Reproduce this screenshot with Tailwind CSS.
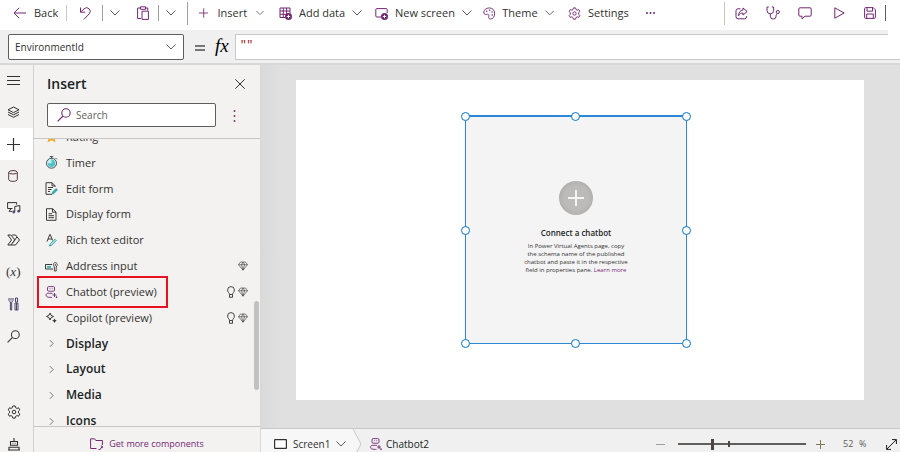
<!DOCTYPE html>
<html lang="en">
<head>
<meta charset="utf-8">
<meta name="viewport" content="width=device-width, initial-scale=1">
<title>Power Apps Studio</title>
<script src="https://cdn.jsdelivr.net/npm/@tailwindcss/browser@4"></script>
</head>
<body class="h-screen flex flex-col overflow-hidden bg-white font-['Open_Sans','Noto_Sans',sans-serif] text-[11px] leading-4 text-[#323130]">

<svg class="hidden" aria-hidden="true">
  <symbol id="chev" viewBox="0 0 10 6"><path d="M.5 .5 5 5 9.500 .5" fill="none" stroke="currentColor" stroke-width="1"/></symbol>
  <symbol id="right" viewBox="0 0 6 10"><path d="M1 1l4 4-4 4" fill="none" stroke="currentColor" stroke-width="1"/></symbol>
  <symbol id="plus" viewBox="0 0 12 12"><path d="M6 0v12M0 6h12" stroke="currentColor" stroke-width="1.100"/></symbol>
  <symbol id="gear" viewBox="0 0 14 14"><g fill="none" stroke="currentColor" stroke-linejoin="round"><path d="M5.800 1h2.400l.4 1.700 1.300.7 1.700-.6 1.200 2.100-1.300 1.200v1.700l1.300 1.300-1.200 2.100-1.700-.6-1.300.8-.4 1.700H5.800l-.4-1.700-1.300-.8-1.700.6-1.200-2.100 1.300-1.300V6.100L1.200 4.900l1.200-2.100 1.700.6 1.300-.7z"/><circle cx="7" cy="7" r="1.800"/></g></symbol>
  <symbol id="lens" viewBox="0 0 14 14"><g fill="none" stroke="currentColor" stroke-width="1.100"><circle cx="9" cy="5" r="4.200"/><path d="M6 8 .6 13.400"/></g></symbol>
  <symbol id="gem" viewBox="0 0 10 10"><path d="M2.500 1h5L9.500 3.700 5 9.200.5 3.700zM.5 3.700h9M3.500 3.700 5 9.200l1.500-5.500M3.500 3.700 5 1l1.500 2.700" fill="none" stroke="currentColor" stroke-width=".6"/></symbol>
  <symbol id="bulb" viewBox="0 0 8 12"><path d="M2.500 8.500C2.500 7 .6 6.300.6 4a3.400 3.400 0 0 1 6.800 0c0 2.300-1.900 3-1.900 4.500zM2.500 8.500v2.800h3V8.500" fill="none" stroke="currentColor" stroke-width=".9"/></symbol>
  <symbol id="bot" viewBox="0 0 12 12"><g fill="none" stroke="currentColor" stroke-width=".9"><rect x="2" y=".6" width="7" height="4.600" rx="1.200"/><path d="M4 2.700h.8M6.300 2.700h.8M7 7.300H2.700C1.200 7.300.6 8 .6 9.200c0 1.500 1.400 2.200 4.900 2.200h1"/><path d="M9 7v4M7 9h4M11 10.400v1.600M10.200 11.200h1.600"/></g></symbol>
</svg>

<header class="h-[30px] shrink-0 flex items-center pb-1 text-[#742774]">
  <button class="w-[66px] shrink-0 pl-[13px] flex items-center gap-2"><svg class="w-[13px] h-3" viewBox="0 0 13 12"><path d="M13 6H1M6.200.8 1 6l5.200 5.200" fill="none" stroke="currentColor"/></svg><span class="text-[#323130]">Back</span></button>
  <div class="w-px h-4 bg-[#c8c6c4]"></div>
  <button class="w-[35px] shrink-0 flex justify-center" aria-label="Undo"><svg class="w-3 h-[13px]" viewBox="0 0 12 13"><path d="M1.500.5v4.700h4.700M1.700 5 5 1.900a3.600 3.600 0 0 1 5.200 5L4.800 12.500" fill="none" stroke="currentColor"/></svg></button>
  <div class="w-px h-4 bg-[#a19f9d]"></div>
  <button class="w-[24px] shrink-0 flex justify-center text-[#605e5c]" aria-label="Undo options"><svg class="w-[10px] h-[6px]"><use href="#chev"/></svg></button>
  <button class="w-[31px] shrink-0 flex justify-center" aria-label="Paste"><svg class="w-3 h-[14px]" viewBox="0 0 12 14"><path d="M4 12.500H.6V2h2.900M8.500 2h2.300v2.500M3.500.8h5v2.500h-5zM5 5.200h6.400v8.200H5z" fill="none" stroke="currentColor"/></svg></button>
  <div class="w-px h-4 bg-[#a19f9d]"></div>
  <button class="w-[28px] shrink-0 flex justify-center pr-1 text-[#605e5c]" aria-label="Paste options"><svg class="w-[10px] h-[6px]"><use href="#chev"/></svg></button>
  <div class="w-px h-[23px] bg-[#a19f9d]"></div>
  <button class="w-[91px] shrink-0 pl-[11px] pr-[15px] flex items-center gap-[9px]"><svg class="w-3 h-3"><use href="#plus"/></svg><span class="text-[#323130]">Insert</span><svg class="ml-auto w-[10px] h-[6px] text-[#605e5c]"><use href="#chev"/></svg></button>
  <button class="w-[82px] shrink-0 flex items-center gap-[7px]"><svg class="w-[13px] h-[13px] shrink-0" viewBox="0 0 13 13"><path d="M7 10.500H1V1h10v5.500M1 4h10M1 7.300h6.500M4.300 1v9.500M7.600 1v6" fill="none" stroke="currentColor"/><circle cx="9.500" cy="9.500" r="3.500" fill="currentColor"/><path d="M9.500 7.800v3.400M7.800 9.500h3.400" stroke="#fff"/></svg><span class="text-[#323130] whitespace-nowrap">Add data</span><svg class="ml-auto w-[10px] h-[6px] shrink-0 text-[#605e5c]"><use href="#chev"/></svg></button>
  <button class="w-[108px] shrink-0 pl-[14px] flex items-center gap-[7px]"><svg class="w-[13px] h-[13px] shrink-0" viewBox="0 0 13 13"><path d="M6 10H1.800a1 1 0 0 1-1-1V2.600a1 1 0 0 1 1-1h9.400a1 1 0 0 1 1 1V6" fill="none" stroke="currentColor"/><circle cx="9.500" cy="9.500" r="3.500" fill="currentColor"/><path d="M9.500 7.800v3.400M7.800 9.500h3.400" stroke="#fff"/></svg><span class="text-[#323130] whitespace-nowrap">New screen</span><svg class="ml-auto w-[10px] h-[6px] shrink-0 text-[#605e5c]"><use href="#chev"/></svg></button>
  <button class="w-[85px] shrink-0 pl-[14px] flex items-center gap-[7px]"><svg class="w-[13px] h-[13px]" viewBox="0 0 13 13"><path d="M1 6C.2 3 3.500.6 6.800.6c3.200 0 5.600 2.400 5.600 5.700 0 3.300-1.800 6.100-4.300 6.100-2 0-2.200-1.500-1.900-2.800.3-1.500-.3-2.300-1.400-2.300-1.700 0-3.100.9-3.800-1.300z" fill="none" stroke="currentColor"/><g fill="currentColor"><circle cx="4" cy="4" r=".8"/><circle cx="7" cy="3" r=".8"/><circle cx="9.600" cy="5" r=".8"/><circle cx="9.800" cy="8" r=".8"/></g></svg><span class="text-[#323130]">Theme</span><svg class="ml-auto w-[10px] h-[6px] text-[#605e5c]"><use href="#chev"/></svg></button>
  <button class="w-[80px] shrink-0 pl-[14px] flex items-center gap-[7px]"><svg class="w-[13px] h-[13px]"><use href="#gear"/></svg><span class="text-[#323130]">Settings</span></button>
  <button class="w-[32px] shrink-0 flex justify-center" aria-label="More commands"><svg class="w-[9px] h-[2px]" viewBox="0 0 9 2" fill="currentColor"><circle cx="1" cy="1" r="1"/><circle cx="4.500" cy="1" r="1"/><circle cx="8" cy="1" r="1"/></svg></button>
  <div class="ml-auto w-px h-[23px] bg-[#c8c6c4]"></div>
  <button class="w-8 shrink-0 flex justify-center" aria-label="Share"><svg class="w-[13px] h-[13px]" viewBox="0 0 13 13"><path d="M5.500 1.800H3a2 2 0 0 0-2 2v6a2 2 0 0 0 2 2h6.500a2 2 0 0 0 2-2V9M8 1l4.200 3.500L8 8V6C5.800 6 4.500 7 3.500 8.800 3.800 5.500 5 3.400 8 3z" fill="none" stroke="currentColor" stroke-linejoin="round"/></svg></button>
  <button class="w-8 shrink-0 flex justify-center" aria-label="App checker"><svg class="w-[14px] h-[14px]" viewBox="0 0 14 14"><path d="M2.800 1H1v3.500a3.300 3.300 0 0 0 6.600 0V1H5.800M4.300 8v2.200a2.900 2.900 0 0 0 5.800 0c0-1.600.4-2 1.400-2.600" fill="none" stroke="currentColor"/><circle cx="11.800" cy="6" r="1.600" fill="none" stroke="currentColor"/></svg></button>
  <button class="w-8 shrink-0 flex justify-center" aria-label="Comments"><svg class="w-[14px] h-[13px]" viewBox="0 0 14 13"><path d="M2 .8h10a1.200 1.200 0 0 1 1.200 1.200v6A1.200 1.200 0 0 1 12 9.200H7l-3 2.700V9.200H2A1.200 1.200 0 0 1 .8 8V2A1.200 1.200 0 0 1 2 .8z" fill="none" stroke="currentColor"/></svg></button>
  <button class="w-8 shrink-0 flex justify-center pl-1" aria-label="Preview"><svg class="w-[11px] h-3" viewBox="0 0 11 12"><path d="M.8.8v10.400L10.200 6z" fill="none" stroke="currentColor" stroke-linejoin="round"/></svg></button>
  <button class="w-8 shrink-0 flex justify-center pl-[2px]" aria-label="Save"><svg class="w-3 h-3" viewBox="0 0 12 12"><path d="M.6 1.600a1 1 0 0 1 1-1h7.600l2.200 2.200v7.600a1 1 0 0 1-1 1H1.600a1 1 0 0 1-1-1zM3 .6v3.600h5.500V.6M2.700 11.400V7h6.600v4.400" fill="none" stroke="currentColor"/></svg></button>
  <div class="w-px h-4 bg-[#605e5c] mr-[14px]"></div>
</header>

<div class="h-[35px] shrink-0 flex items-start bg-[#f0f0f0] border-b-2 border-[#d8d8d8]">
  <div class="relative ml-2 mt-1 w-[176px] shrink-0">
    <select aria-label="Property" class="block w-full h-[26px] appearance-none rounded-[2px] border border-[#605e5c] bg-white pl-[6px] text-[10px] text-[#323130]"><option>EnvironmentId</option></select>
    <svg class="pointer-events-none absolute right-2 top-[10px] w-[10px] h-[6px] text-[#605e5c]"><use href="#chev"/></svg>
  </div>
  <label for="formula" class="w-[51px] shrink-0 h-8 flex items-center pl-[11px] gap-[10px] text-black"><svg class="w-[10px] h-[6px] mt-1" viewBox="0 0 10 6"><path d="M0 1h10M0 5h10" stroke="currentColor" stroke-width="1.200"/></svg><span class="font-['Liberation_Serif',serif] italic text-[19px] leading-4">fx</span></label>
  <input id="formula" value='""' class="mt-1 flex-1 min-w-0 h-[26px] border border-r-0 border-[#c8c8c8] bg-white pl-1 pb-1 font-['Liberation_Mono',monospace] text-[11px] text-[#a31515]">
  <div class="w-3 h-[30px] shrink-0 bg-white border-b border-[#c8c8c8]"></div>
</div>

<div class="flex-1 min-h-0 flex">
  <nav class="w-[34px] shrink-0 bg-[#f3f2f1] border-r border-[#d2d0ce] flex flex-col overflow-hidden text-[#323130]">
    <button class="h-[31px] shrink-0 pl-[7px]" aria-label="Expand"><svg class="w-[13px] h-[9px]" viewBox="0 0 13 9"><path d="M0 .5h13M0 4.500h13M0 8.500h13" stroke="currentColor"/></svg></button>
    <button class="h-8 shrink-0 pl-[7px]" aria-label="Tree view"><svg class="w-[13px] h-[13px]" viewBox="0 0 13 13"><path d="M6.500 1 12 3.800 6.500 6.600 1 3.800zM1 6l5.500 2.800L12 6M1 8.500l5.500 2.800L12 8.500" fill="none" stroke="currentColor" stroke-linejoin="round"/></svg></button>
    <button class="h-8 shrink-0 pl-[7px] bg-white" aria-label="Insert"><svg class="w-[13px] h-[13px]"><use href="#plus"/></svg></button>
    <button class="h-8 shrink-0 pl-[8px]" aria-label="Data"><svg class="w-[10px] h-3" viewBox="0 0 10 12"><g fill="none" stroke="#5b3a3c"><ellipse cx="5" cy="2.300" rx="4.300" ry="1.700"/><path d="M.7 2.300v7.200c0 1 2 1.900 4.300 1.900s4.300-.9 4.300-1.900V2.300"/></g></svg></button>
    <button class="h-8 shrink-0 pl-[7px]" aria-label="Media"><svg class="w-[14px] h-3" viewBox="0 0 14 12"><g fill="none" stroke="currentColor"><path d="M5.500 6.500H.6V.6h9v2M2 9.300 4 6.700M2 9.300h3"/><path d="M7.800 10V4.500l5-1v5.500"/></g><circle cx="6.700" cy="10" r="1.400" fill="#4b4a6b"/><circle cx="11.700" cy="9.200" r="1.400" fill="#4b4a6b"/></svg></button>
    <button class="h-8 shrink-0 pl-[7px]" aria-label="Power Automate"><svg class="w-[13px] h-3" viewBox="0 0 13 12"><path d="M.8 1h3L8 6l-4.200 5h-3L4.600 6zM5.200 1h3.300l4 5-4 5H3.800M5.500 8.800 10 3" fill="none" stroke="currentColor" stroke-linejoin="round"/></svg></button>
    <button class="h-8 shrink-0 pl-[6px] text-left font-['Liberation_Serif',serif] text-[13px]" aria-label="Variables">(<i>x</i>)</button>
    <button class="h-8 shrink-0 pl-[8px]" aria-label="Advanced tools"><svg class="w-[11px] h-[14px]" viewBox="0 0 11 14"><g fill="none" stroke="#4b4668"><path d="M1 1v2.500L2.400 5v8h1.300V5L5 3.500V1M3 1v2.500"/><path d="M7.500 1h2v4h-2zM7 6h3v7H7zM8.500 6v7"/></g></svg></button>
    <button class="h-8 shrink-0 pl-[7px]" aria-label="Search"><svg class="w-[13px] h-[13px]"><use href="#lens"/></svg></button>
    <div class="mt-auto -mb-2 flex flex-col">
      <button class="h-8 shrink-0 pl-[7px]" aria-label="Settings"><svg class="w-[14px] h-[14px]"><use href="#gear"/></svg></button>
      <button class="h-8 shrink-0 pl-[8px]" aria-label="Virtual agent"><svg class="w-3 h-[13px]" viewBox="0 0 12 13"><path d="M6 0v3M2.500 3.500h7v3.800h-7zM4.500 5.200h.8M6.700 5.200h.8M1 12.500V9.200h10v3.300M0 12h12" fill="none" stroke="currentColor" stroke-width="1.100"/></svg></button>
    </div>
  </nav>

  <aside class="w-[227px] shrink-0 bg-[#f3f2f1] border-r border-[#d8d8d8] flex flex-col">
    <div class="h-[38px] shrink-0 flex items-center justify-between pl-[13px] pr-[15px]">
      <h2 class="text-[14px] font-semibold text-[#201f1e]">Insert</h2>
      <button aria-label="Close"><svg class="w-[10px] h-[10px]" viewBox="0 0 10 10"><path d="M.3.300l9.400 9.400M9.700.3.300 9.700" stroke="currentColor"/></svg></button>
    </div>
    <div class="h-[36px] shrink-0 flex items-start pl-[13px] border-b border-[#c8c6c4]">
      <div class="relative w-[169px]">
        <svg class="absolute left-[10px] top-[5px] w-[14px] h-[14px] text-[#742774]"><use href="#lens"/></svg>
        <input type="search" aria-label="Search" placeholder="Search" class="block w-full h-6 rounded-[2px] border border-[#605e5c] bg-white pl-7 text-[10px] placeholder:text-[#605e5c]">
      </div>
      <button class="ml-[17px] mt-[7px]" aria-label="More"><svg class="w-[3px] h-3" viewBox="0 0 3 12" fill="#742774"><circle cx="1.500" cy="1" r=".9"/><circle cx="1.500" cy="6" r=".9"/><circle cx="1.500" cy="11" r=".9"/></svg></button>
    </div>
    <div class="relative flex-1 min-h-0 overflow-hidden">
      <ul class="-mt-[15px] h-[310px] flex flex-col pl-[11px] pr-3 [&>li]:flex-1 [&>li]:flex [&>li]:items-center [&>li>button]:flex [&>li>button]:items-center [&>li>button]:w-full [&>li>button]:gap-2">
        <li><button><svg class="w-[13px] h-[13px]" viewBox="0 0 13 13"><path d="m6.500.5 1.900 4 4.300.5-3.200 3 .9 4.400-3.900-2.200-3.900 2.200.9-4.400L.3 5l4.300-.5z" fill="#f7a928"/></svg>Rating</button></li>
        <li><button><svg class="w-[13px] h-[13px]" viewBox="0 0 13 13"><circle cx="6.500" cy="7.200" r="5" fill="#e8f6f6" stroke="#3b5156"/><circle cx="6.500" cy="7.200" r="3.700" fill="#4fc4c7"/><path d="M6.500 7.200V3.500A3.700 3.700 0 0 0 2.800 7.200z" fill="#c9eeee"/><path d="M4.800.6h3.400M6.500.6v2M10.500 2l1.300 1.300" stroke="#3b5156"/></svg>Timer</button></li>
        <li><button><svg class="w-[13px] h-[13px]" viewBox="0 0 13 13"><path d="M10 5V3.700L7 .7H1v11.600h6M7 .7v3.200h3M3 5.500h5M3 7.500h3.500M3 9.500h2" fill="none" stroke="#3b3a39"/><path d="m7 12 .5-2L11 6.500l1.500 1.300L9 11.500z" fill="#2bb5b8" stroke="#1b8f92" stroke-width=".6"/></svg>Edit form</button></li>
        <li><button><svg class="w-[13px] h-[13px]" viewBox="0 0 13 13"><path d="M11 12.300H1.500V.7H7.700L11 4zM7.500.7v3.500H11M3.500 5.700H7M3.500 7.700h5.500M3.500 9.700h5.500" fill="none" stroke="#3b3a39"/></svg>Display form</button></li>
        <li><button><svg class="w-[13px] h-[13px]" viewBox="0 0 13 13"><path d="m2 7.500 2.800-7h.4l2.500 6M3 5h4" fill="none" stroke="#3b3a39"/><path d="m4.500 12 .7-2L10 5.300l1.200 1.200L6.500 11.300z" fill="#d9f2f2" stroke="#1b9c9f"/></svg>Rich text editor</button></li>
        <li><button><svg class="w-[13px] h-[13px]" viewBox="0 0 13 13"><path d="M8 9H.5V4.500H7" fill="none" stroke="#3b3a39"/><path d="M2 6h4v1.800H2z" fill="#2bb5b8"/><path d="M8.500 5.500a2 2 0 1 1 3.600 0L11.200 7v4H9.400V7zM10.300 4v2" fill="none" stroke="#3b3a39" stroke-width=".9"/></svg>Address input<svg class="ml-auto w-[10px] h-[10px]"><use href="#gem"/></svg></button></li>
        <li><button><svg class="w-[13px] h-3 text-[#742774]"><use href="#bot"/></svg>Chatbot (preview)<span class="ml-auto flex items-center gap-[3px]"><svg class="w-2 h-3"><use href="#bulb"/></svg><svg class="w-[10px] h-[10px]"><use href="#gem"/></svg></span></button></li>
        <li><button><svg class="w-[13px] h-[13px]" viewBox="0 0 13 13"><path d="m5 2 1.100 2.400L8.500 5.500 6.100 6.600 5 9 3.900 6.600 1.500 5.500l2.400-1.100z" fill="none" stroke="#323130"/><path d="m9.500 7.500.8 1.500 1.500.7-1.500.7-.8 1.600-.8-1.600-1.500-.7 1.500-.7z" fill="#323130"/></svg>Copilot (preview)<span class="ml-auto flex items-center gap-[3px]"><svg class="w-2 h-3"><use href="#bulb"/></svg><svg class="w-[10px] h-[10px]"><use href="#gem"/></svg></span></button></li>
        <li><button aria-expanded="false" class="text-[12px] font-semibold text-[#201f1e]"><svg class="mx-[4px] w-[5px] h-[9px] text-[#605e5c]"><use href="#right"/></svg>Display</button></li>
        <li><button aria-expanded="false" class="text-[12px] font-semibold text-[#201f1e]"><svg class="mx-[4px] w-[5px] h-[9px] text-[#605e5c]"><use href="#right"/></svg>Layout</button></li>
        <li><button aria-expanded="false" class="text-[12px] font-semibold text-[#201f1e]"><svg class="mx-[4px] w-[5px] h-[9px] text-[#605e5c]"><use href="#right"/></svg>Media</button></li>
        <li><button aria-expanded="false" class="text-[12px] font-semibold text-[#201f1e]"><svg class="mx-[4px] w-[5px] h-[9px] text-[#605e5c]"><use href="#right"/></svg>Icons</button></li>
      </ul>
      <div class="pointer-events-none absolute left-[3px] top-[137px] w-[131px] h-8 border-2 border-[#e81123]"></div>
      <div class="absolute right-[1px] top-[162px] w-[5px] h-[89px] rounded-full bg-[#c1c1c1]"></div>
    </div>
    <div class="h-[26px] shrink-0 border-t border-[#c8c6c4] flex items-center justify-center pt-[9px] text-[9px] text-[#742774]">
      <button class="flex items-center gap-[6px]"><svg class="w-[13px] h-3" viewBox="0 0 13 12"><path d="M6.500 10.500H.6V.8h4l1.200 1.700h6.600v4.500" fill="none" stroke="currentColor"/><path d="M8.500 11.500h1.700L12 8.700M10.800 8l1.700.5-.4 1.700" fill="none" stroke="currentColor"/></svg>Get more components</button>
    </div>
  </aside>

  <main class="flex-1 min-w-0 flex flex-col">
    <div class="flex-1 min-h-0 flex pt-[15px] pr-9 pb-7 pl-[35px] bg-[#e0e0e0] bg-linear-to-r from-[#dadada] to-[#e0e0e0] to-[20px]">
      <div class="relative flex-1 bg-white">
        <section class="absolute left-[169px] top-[35px] w-[222px] h-[229px] border border-t-2 border-[#2b88d8] bg-[#f4f4f4] flex flex-col items-center pt-[64px] text-center">
          <div class="w-[34px] h-[34px] rounded-full bg-radial from-[#bdbbb9] from-50% to-[#a3a1a0] flex items-center justify-center"><svg class="w-4 h-4" viewBox="0 0 16 16"><path d="M8 0v16M0 8h16" stroke="#f4f4f4" stroke-width="2"/></svg></div>
          <h3 class="mt-[10px] text-[8px] leading-4 font-semibold text-[#201f1e]">Connect a chatbot</h3>
          <p class="mt-px text-[6px] leading-[8px] whitespace-nowrap">In Power Virtual Agents page, copy<br>the schema name of the published<br>chatbot and paste it in the respective<br>field in properties pane. <a href="#" class="text-[#742774]">Learn more</a></p>
          <div class="absolute -inset-[5px] grid grid-cols-3 content-between [&>i]:size-[9px] [&>i]:rounded-full [&>i]:border [&>i]:border-[#0078d4] [&>i]:bg-white">
            <i></i><i class="justify-self-center"></i><i class="justify-self-end"></i>
            <i></i><i class="invisible"></i><i class="justify-self-end"></i>
            <i></i><i class="justify-self-center"></i><i class="justify-self-end"></i>
          </div>
        </section>
      </div>
    </div>
    <footer class="h-6 shrink-0 flex items-stretch bg-[#f0f0f0] border-t border-[#c8c8c8] text-[10px] [&>*]:pt-[7px]">
      <button class="w-[92px] shrink-0 flex items-center pl-[13px] gap-[6px] bg-[#f7f7f7]"><svg class="w-[13px] h-[10px]" viewBox="0 0 13 10"><rect x=".6" y=".6" width="11.800" height="8.800" rx=".5" fill="#fff" stroke="#323130" stroke-width="1.200"/></svg>Screen1<svg class="w-[10px] h-[6px] text-[#605e5c]"><use href="#chev"/></svg></button>
      <svg class="w-[9px] shrink-0 !pt-0 h-[30px]" viewBox="0 0 9 30"><path d="M0 0 8 15 0 30z" fill="#f7f7f7"/><path d="M0 0 8 15 0 30" fill="none" stroke="#c8c8c8"/></svg>
      <button class="flex items-center pl-2 gap-1 text-[#201f1e]"><svg class="w-3 h-3 text-[#742774]"><use href="#bot"/></svg>Chatbot2</button>
      <div class="ml-auto flex items-center pr-[3px] text-[#605e5c]">
        <button aria-label="Zoom out" class="mr-[13px]"><svg class="w-[9px] h-[9px]" viewBox="0 0 9 9"><path d="M0 4.500h9" stroke="#a19f9d"/></svg></button>
        <div class="relative w-32 h-[11px] flex items-center">
          <input type="range" aria-label="Zoom" min="0" max="200" value="52" class="w-full h-[11px] appearance-none bg-linear-to-b from-transparent from-[4px] via-[#605e5c] via-[4px] to-[#605e5c] to-[4px] [&::-webkit-slider-runnable-track]:h-[11px] [&::-webkit-slider-thumb]:appearance-none [&::-webkit-slider-thumb]:w-[3px] [&::-webkit-slider-thumb]:h-[11px] [&::-webkit-slider-thumb]:bg-[#484644] [background-size:100%_6px] bg-no-repeat">
          <span class="absolute left-[50px] top-[2px] w-[2px] h-[6px] bg-[#484644]"></span>
        </div>
        <button aria-label="Zoom in" class="ml-[10px]"><svg class="w-[9px] h-[9px]" viewBox="0 0 9 9"><path d="M4.500 0v9M0 4.500h9" stroke="#7d7a55"/></svg></button>
        <span class="ml-[18px] w-[15px] text-[9px]">52</span><span class="w-7 pl-px text-[9px]">%</span>
        <button aria-label="Fit to window" class="text-[#201f1e]"><svg class="w-[11px] h-[11px]" viewBox="0 0 11 11"><path d="M.7 10.300 10.300.7M6 .6h4.400V5M.6 6v4.400H5" fill="none" stroke="currentColor"/></svg></button>
      </div>
    </footer>
  </main>
</div>
</body>
</html>
